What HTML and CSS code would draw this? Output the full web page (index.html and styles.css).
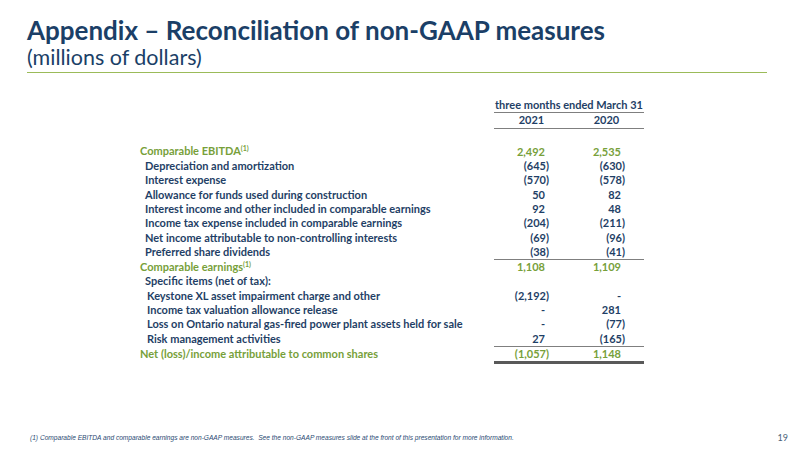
FILE: index.html
```html
<!DOCTYPE html>
<html lang="en">
<head>
  <meta charset="UTF-8">
  <title>Appendix – Reconciliation of non-GAAP measures</title>
  <link rel="stylesheet" href="styles.css">
</head>
<body>
  <div class="slide">
    <div class="head">
      <h1>Appendix – Reconciliation of non-GAAP measures</h1>
      <div class="sub">(millions of dollars)</div>
    </div>

    <table class="recon">
      <thead>
        <tr>
          <th class="label"></th>
          <th class="period" colspan="2">three months ended March 31</th>
        </tr>
        <tr>
          <th class="label"></th>
          <th class="yr">2021</th>
          <th class="yr">2020</th>
        </tr>
      </thead>
      <tbody>
        <tr class="total first">
          <td class="label">Comparable EBITDA<sup>(1)</sup></td>
          <td class="num pos">2,492</td>
          <td class="num pos">2,535</td>
        </tr>
        <tr>
          <td class="label sub1">Depreciation and amortization</td>
          <td class="num">(645)</td>
          <td class="num">(630)</td>
        </tr>
        <tr>
          <td class="label sub1">Interest expense</td>
          <td class="num">(570)</td>
          <td class="num">(578)</td>
        </tr>
        <tr>
          <td class="label sub1">Allowance for funds used during construction</td>
          <td class="num pos">50</td>
          <td class="num pos">82</td>
        </tr>
        <tr>
          <td class="label sub1">Interest income and other included in comparable earnings</td>
          <td class="num pos">92</td>
          <td class="num pos">48</td>
        </tr>
        <tr>
          <td class="label sub1">Income tax expense included in comparable earnings</td>
          <td class="num">(204)</td>
          <td class="num">(211)</td>
        </tr>
        <tr>
          <td class="label sub1">Net income attributable to non-controlling interests</td>
          <td class="num">(69)</td>
          <td class="num">(96)</td>
        </tr>
        <tr class="ruled">
          <td class="label sub1">Preferred share dividends</td>
          <td class="num">(38)</td>
          <td class="num">(41)</td>
        </tr>
        <tr class="total">
          <td class="label">Comparable earnings<sup>(1)</sup></td>
          <td class="num pos">1,108</td>
          <td class="num pos">1,109</td>
        </tr>
        <tr>
          <td class="label sub1">Specific items (net of tax):</td>
          <td class="num"></td>
          <td class="num"></td>
        </tr>
        <tr>
          <td class="label sub2">Keystone XL asset impairment charge and other</td>
          <td class="num">(2,192)</td>
          <td class="num pos">-</td>
        </tr>
        <tr>
          <td class="label sub2">Income tax valuation allowance release</td>
          <td class="num pos">-</td>
          <td class="num pos">281</td>
        </tr>
        <tr>
          <td class="label sub2">Loss on Ontario natural gas-fired power plant assets held for sale</td>
          <td class="num pos">-</td>
          <td class="num">(77)</td>
        </tr>
        <tr class="ruled">
          <td class="label sub2">Risk management activities</td>
          <td class="num pos">27</td>
          <td class="num">(165)</td>
        </tr>
        <tr class="total final">
          <td class="label">Net (loss)/income attributable to common shares</td>
          <td class="num">(1,057)</td>
          <td class="num pos">1,148</td>
        </tr>
      </tbody>
    </table>

    <div class="foot">
      <div class="note">(1) Comparable EBITDA and comparable earnings are non-GAAP measures.&nbsp; See the non-GAAP measures slide at the front of this presentation for more information.</div>
      <div class="page">19</div>
    </div>
  </div>
</body>
</html>
```

FILE: styles.css
```css
body {
  margin: 0;
  background-color: white;
  font-family: 'Lato', 'Open Sans', sans-serif;
}
.slide {
  width: 800px;
  height: 450px;
  position: relative;
  overflow: hidden;
  background-color: white;
}
.head {
  margin: 0 33px 0 27px;
  padding-top: 15px;
  padding-bottom: 3px;
  border-bottom: 1px solid #9bbb59;
}
h1 {
  margin: 0;
  font-size: 26px;
  line-height: 31px;
  font-weight: bold;
  color: #1b3f67;
}
.sub {
  font-size: 21.5px;
  line-height: 23px;
  color: #1b3f67;
}
.recon {
  margin: 25px 0 0 140px;
  border-collapse: collapse;
  font-size: 11px;
  font-weight: bold;
  color: #1f3f66;
}
.recon th,
.recon td {
  padding: 0;
  height: 14.3px;
  line-height: 14px;
  white-space: nowrap;
}
.recon .label {
  width: 347px;
  text-align: left;
}
.period {
  text-align: center;
  border-bottom: 1px solid #7f7f7f;
}
.yr {
  width: 75px;
  text-align: center;
  border-bottom: 1px solid #7f7f7f;
}
.num {
  text-align: right;
  padding-right: 20px !important;
}
.num.pos {
  padding-right: 24px !important;
}
.recon td:last-child {
  padding-right: 19px !important;
}
.recon td.pos:last-child {
  padding-right: 23px !important;
}
.first td {
  padding-top: 16px;
}
.total td {
  color: #77a03a;
}
.sub1 {
  padding-left: 5px !important;
}
.sub2 {
  padding-left: 7px !important;
}
sup {
  font-size: 7px;
  line-height: 0;
  vertical-align: 4px;
}
.ruled td.num {
  border-bottom: 1px solid #7f7f7f;
}
.final td.num {
  border-bottom: 3px solid #595959;
}
.foot {
  position: absolute;
  left: 30px;
  right: 12px;
  top: 432px;
  display: flex;
  justify-content: space-between;
  align-items: center;
}
.note {
  font-family: 'Liberation Sans Narrow', 'Liberation Sans', sans-serif;
  font-style: italic;
  font-size: 6.6px;
  color: #2a4a73;
}
.page {
  font-size: 9px;
  color: #4a5f7a;
}
```
